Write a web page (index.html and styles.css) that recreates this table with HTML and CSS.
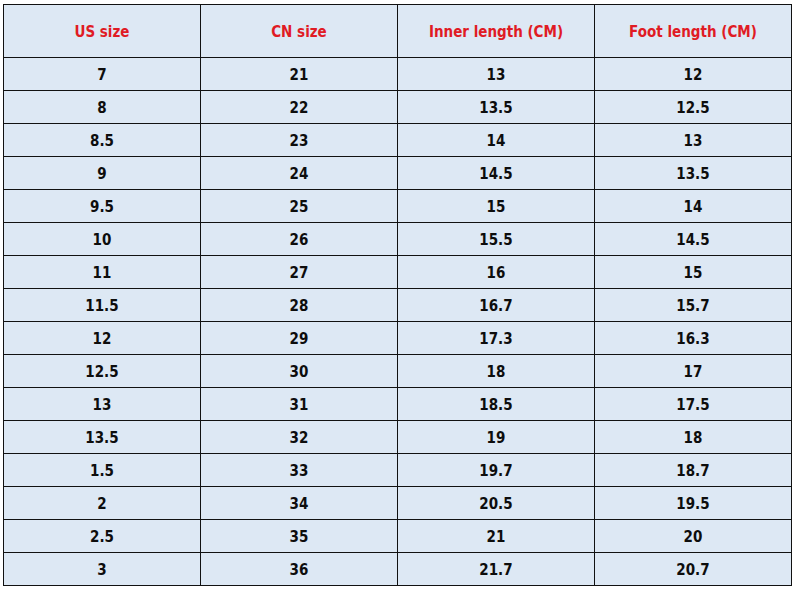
FILE: index.html
```html
<!DOCTYPE html>
<html>
<head>
<meta charset="utf-8">
<link rel="stylesheet" href="styles.css">
</head>
<body>
<table class="size-table">
  <thead>
    <tr><th>US size</th><th>CN size</th><th>Inner length (CM)</th><th>Foot length (CM)</th></tr>
  </thead>
  <tbody>
    <tr><td>7</td><td>21</td><td>13</td><td>12</td></tr>
    <tr><td>8</td><td>22</td><td>13.5</td><td>12.5</td></tr>
    <tr><td>8.5</td><td>23</td><td>14</td><td>13</td></tr>
    <tr><td>9</td><td>24</td><td>14.5</td><td>13.5</td></tr>
    <tr><td>9.5</td><td>25</td><td>15</td><td>14</td></tr>
    <tr><td>10</td><td>26</td><td>15.5</td><td>14.5</td></tr>
    <tr><td>11</td><td>27</td><td>16</td><td>15</td></tr>
    <tr><td>11.5</td><td>28</td><td>16.7</td><td>15.7</td></tr>
    <tr><td>12</td><td>29</td><td>17.3</td><td>16.3</td></tr>
    <tr><td>12.5</td><td>30</td><td>18</td><td>17</td></tr>
    <tr><td>13</td><td>31</td><td>18.5</td><td>17.5</td></tr>
    <tr><td>13.5</td><td>32</td><td>19</td><td>18</td></tr>
    <tr><td>1.5</td><td>33</td><td>19.7</td><td>18.7</td></tr>
    <tr><td>2</td><td>34</td><td>20.5</td><td>19.5</td></tr>
    <tr><td>2.5</td><td>35</td><td>21</td><td>20</td></tr>
    <tr><td>3</td><td>36</td><td>21.7</td><td>20.7</td></tr>
  </tbody>
</table>
</body>
</html>
```
FILE: styles.css
```css
html, body {
  margin: 0;
  padding: 0;
  background: #ffffff;
}
body {
  padding: 4px 0 0 3px;
}
.size-table {
  border-collapse: collapse;
  table-layout: fixed;
  width: 789px;
  background: #dde8f4;
  font-family: "DejaVu Sans Condensed", "DejaVu Sans", Verdana, sans-serif;
  font-stretch: condensed;
  font-weight: bold;
  font-size: 15px;
}
.size-table th,
.size-table td {
  border: 1px solid #111111;
  text-align: center;
  padding: 2px 0 0 0;
}
.size-table th {
  height: 50px;
  color: #e01b24;
}
.size-table td {
  height: 30px;
  color: #0d0d0d;
}
```
